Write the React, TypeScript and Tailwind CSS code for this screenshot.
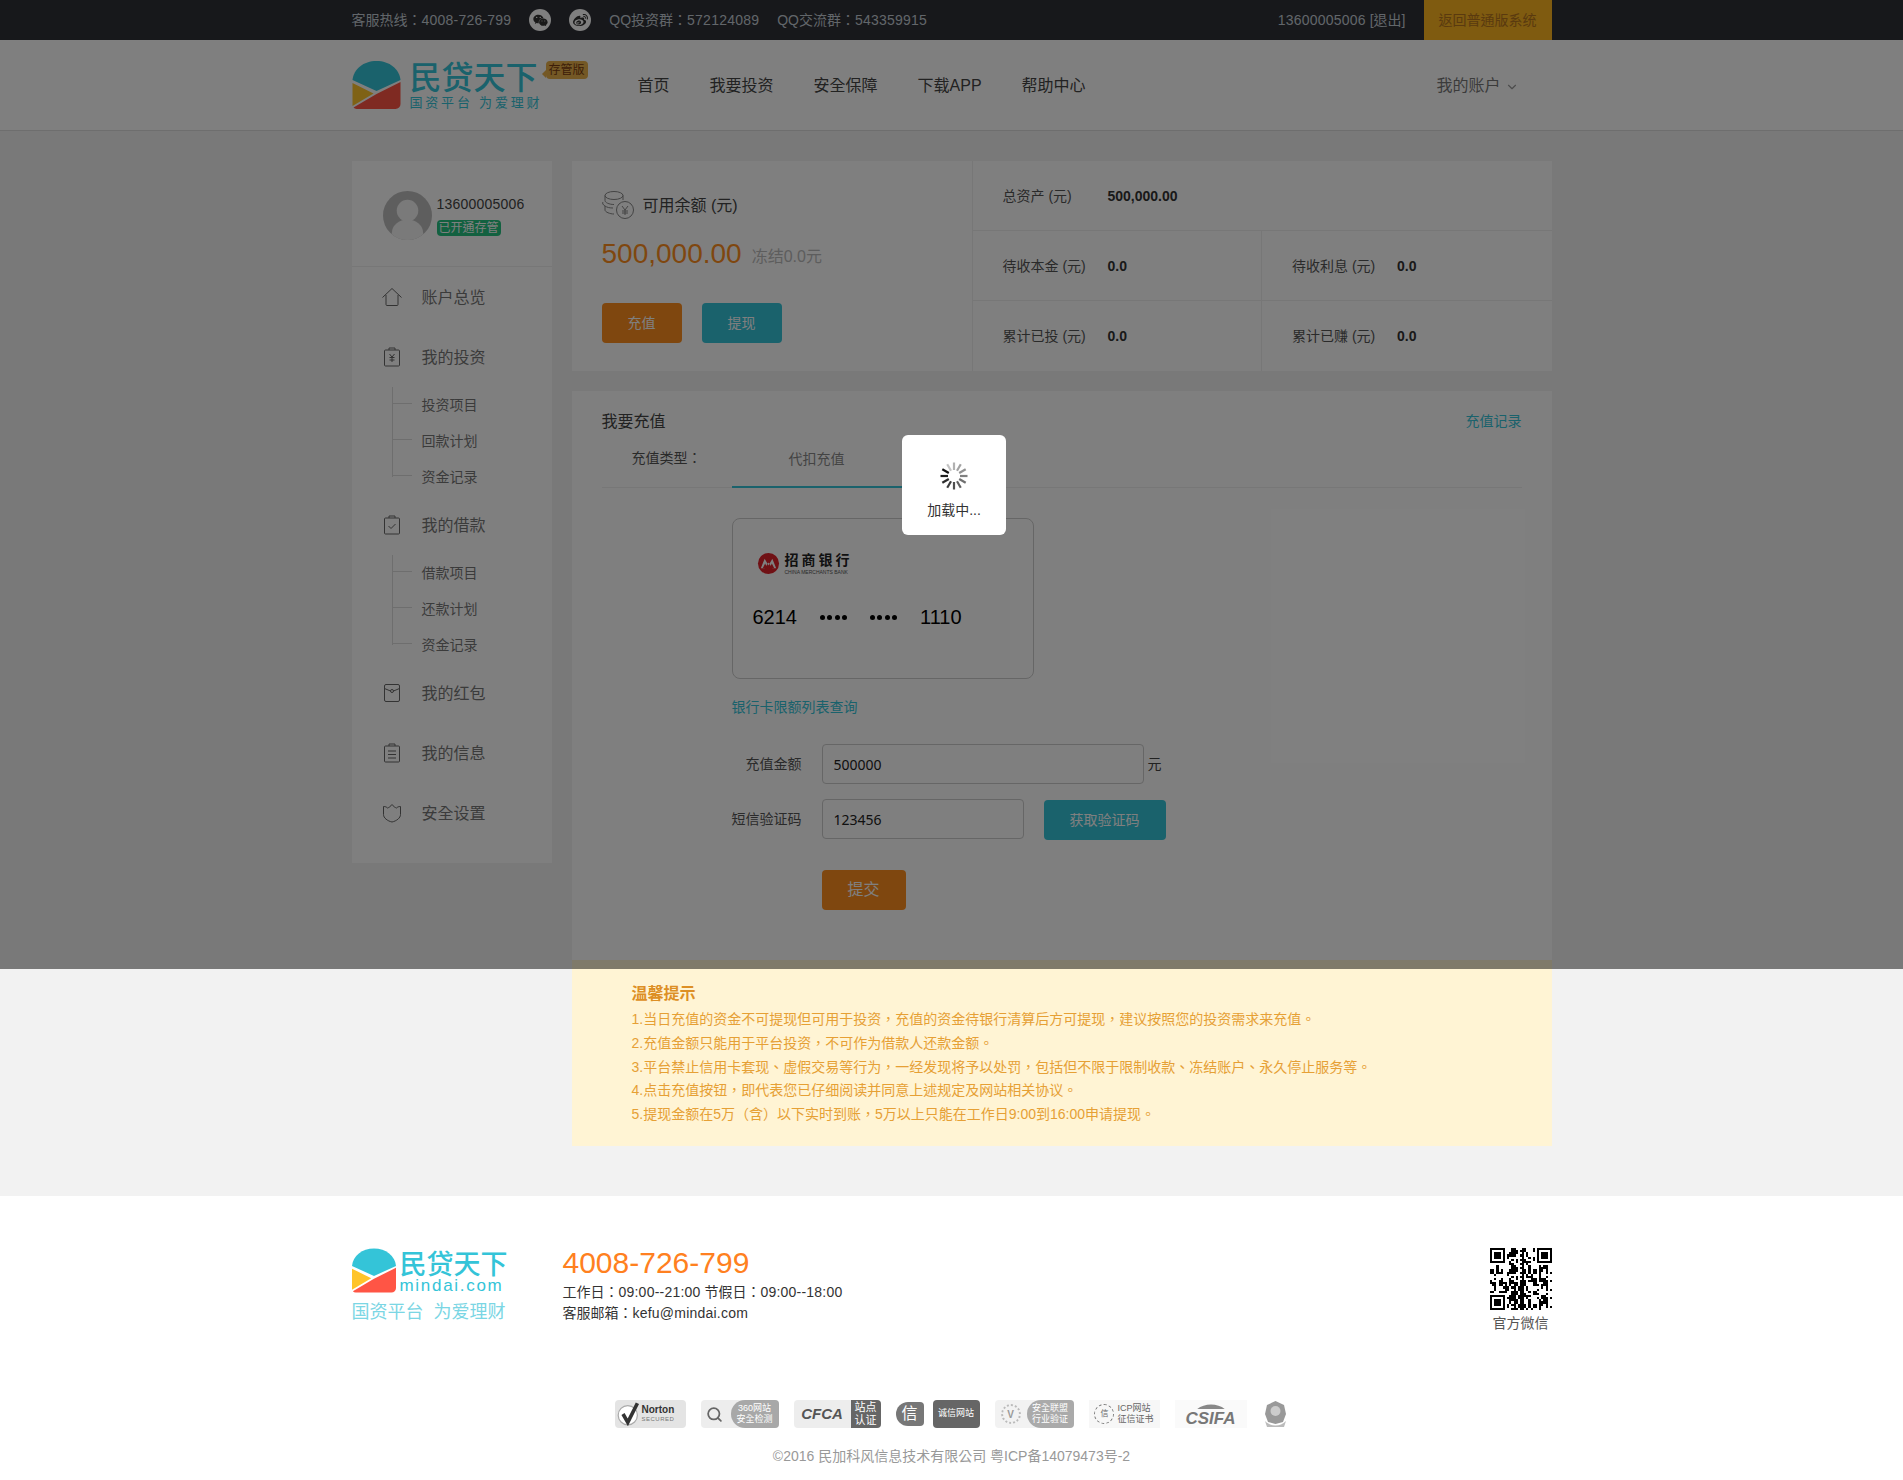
// App.tsx
import { FaWeibo, FaWeixin } from "react-icons/fa"
import { ChevronDown, Search } from "lucide-react"

const SANS = "font-['Liberation_Sans','Noto_Sans_CJK_TC',sans-serif]"

const topNav = ["首页", "我要投资", "安全保障", "下载APP", "帮助中心"]

const tips = [
  "1.当日充值的资金不可提现但可用于投资，充值的资金待银行清算后方可提现，建议按照您的投资需求来充值。",
  "2.充值金额只能用于平台投资，不可作为借款人还款金额。",
  "3.平台禁止信用卡套现、虚假交易等行为，一经发现将予以处罚，包括但不限于限制收款、冻结账户、永久停止服务等。",
  "4.点击充值按钮，即代表您已仔细阅读并同意上述规定及网站相关协议。",
  "5.提现金额在5万（含）以下实时到账，5万以上只能在工作日9:00到16:00申请提现。",
]

const LogoMark = ({ className }: { className: string }) => (
  <svg viewBox="0 0 48 48" className={className}>
    <path d="M0 19C1 8 11 0 24 0s23 8 24 19L24 30z" fill="#34c4d8" />
    <path d="M0 22l21 10.500L0 45z" fill="#ffc42a" />
    <path d="M48 21v22a5 5 0 0 1-5 5H4a4 4 0 0 1-3-1.500L24 33z" fill="#ff5545" />
  </svg>
)

const IconWrap = ({ children }: { children: React.ReactNode }) => (
  <svg viewBox="0 0 20 20" className="w-5 h-5" fill="none" stroke="#666" strokeWidth="1">
    {children}
  </svg>
)

const icons: Record<string, React.ReactNode> = {
  home: (
    <IconWrap>
      <path d="M.5 10.500 10 1.500l9.500 9M4 8v9.500a1 1 0 0 0 1 1h10a1 1 0 0 0 1-1V8" />
    </IconWrap>
  ),
  invest: (
    <IconWrap>
      <path d="M2.500 4a1 1 0 0 1 1-1h13a1 1 0 0 1 1 1v14a1 1 0 0 1-1 1h-13a1 1 0 0 1-1-1zM7 3V1h6v2" />
      <path d="M7.500 7 10 10l2.500-3M10 10v5M7.500 10.500h5M7.500 13h5" />
    </IconWrap>
  ),
  loan: (
    <IconWrap>
      <path d="M2.500 4a1 1 0 0 1 1-1h13a1 1 0 0 1 1 1v14a1 1 0 0 1-1 1h-13a1 1 0 0 1-1-1zM7 3V1h6v2" />
      <path d="m6.500 11 2.500 2.500 4.500-4.500" />
    </IconWrap>
  ),
  packet: (
    <IconWrap>
      <path d="M2.500 3a1.500 1.500 0 0 1 1.500-1.500h12A1.500 1.500 0 0 1 17.500 3v14a1.500 1.500 0 0 1-1.500 1.500H4A1.500 1.500 0 0 1 2.500 17z" />
      <path d="M2.500 5.500 8.500 8M17.500 5.500 11.500 8" />
      <circle cx="10" cy="8" r="1.500" />
    </IconWrap>
  ),
  info: (
    <IconWrap>
      <path d="M2.500 4a1 1 0 0 1 1-1h13a1 1 0 0 1 1 1v14a1 1 0 0 1-1 1h-13a1 1 0 0 1-1-1zM7 3V1h6v2M6 8h8M6 11.500h8M6 15h8" />
    </IconWrap>
  ),
  shield: (
    <IconWrap>
      <path d="M1.500 3.500c2 0 3 .5 4 1.500 1.500-.5 3-1.500 4.500-3.500 1.500 2 3 3 4.500 3.500 1-1 2-1.500 4-1.500v8c0 3.500-4 6.500-8.500 7.500-4.500-1-8.500-4-8.500-7.500z" />
    </IconWrap>
  ),
}

// the reference has whole-pixel digit widths, a hair wider than ours
const Num = ({ children }: { children: React.ReactNode }) => (
  <span className="tracking-[0.22px]">{children}</span>
)

const SubNav = ({ items }: { items: string[] }) => (
  <div className="relative">
    <div className="absolute left-[40px] top-0 h-[90px] w-px bg-[#ddd]" />
    {items.map((item) => (
      <div key={item} className="relative h-9 pl-[70px] text-sm leading-9 text-[#777]">
        <span className="absolute left-[40px] top-[16px] h-px w-5 bg-[#ddd]" />
        {item}
      </div>
    ))}
  </div>
)

const NavItem = ({ icon, label }: { icon: string; label: string }) => (
  <div className="flex h-[60px] items-center pl-[30px] text-base text-[#777]">
    {icons[icon]}
    <span className="ml-5 mt-[2px]">{label}</span>
  </div>
)

const Sidebar = () => (
  <aside className="w-[200px] bg-white pb-5">
    <div className="flex h-[106px] items-center border-b border-[#eee] pl-[31px] pt-[3px]">
      <svg viewBox="0 0 50 50" className="h-[49px] w-[49px]">
        <defs>
          <clipPath id="avatar">
            <circle cx="25" cy="25" r="25" />
          </clipPath>
        </defs>
        <circle cx="25" cy="25" r="25" fill="#bdbdbd" />
        <g clipPath="url(#avatar)" fill="#f5f5f5">
          <circle cx="25" cy="20" r="11" />
          <ellipse cx="25" cy="43" rx="16" ry="14" />
        </g>
      </svg>
      <div className="-mt-[2px] ml-[5px]">
        <div className="text-sm leading-[22px] text-[#444]">
          <Num>13600005006</Num>
        </div>
        <div className="mt-[5px] h-4 w-16 rounded-sm bg-[#26c281] text-center text-xs leading-4 text-white">
          已开通存管
        </div>
      </div>
    </div>
    <NavItem icon="home" label="账户总览" />
    <NavItem icon="invest" label="我的投资" />
    <SubNav items={["投资项目", "回款计划", "资金记录"]} />
    <NavItem icon="loan" label="我的借款" />
    <SubNav items={["借款项目", "还款计划", "资金记录"]} />
    <NavItem icon="packet" label="我的红包" />
    <NavItem icon="info" label="我的信息" />
    <NavItem icon="shield" label="安全设置" />
  </aside>
)

const Stat = ({ label, value }: { label: string; value: string }) => (
  <div className="flex h-full items-center pl-[30px] text-sm">
    <span className="w-[105px] text-[#555]">{label}</span>
    <span className="font-bold text-[#333]">{value}</span>
  </div>
)

const CoinIcon = () => (
  <svg viewBox="0 0 32 28" className="h-7 w-8" fill="none" stroke="#888" strokeWidth="1">
    <ellipse cx="12" cy="4.500" rx="9" ry="4" />
    <path d="M3 4.500v5c0 2 4 4 9 4M1 11c-1 1 0 3 2 4v4c0 2 5 4 9 4M3 15c2 1.500 5 2 8 2" />
    <path d="M21 4.500V9" />
    <circle cx="23" cy="19" r="8.500" fill="#fff" />
    <path d="m20 15 3 4 3-4M23 19v5M20 20h6M20 22h6" />
  </svg>
)

const BalanceCard = () => (
  <div className="flex h-[210px] bg-white">
    <div className="w-[401px] shrink-0 border-r border-[#eee] pl-[30px]">
      <div className="mt-[30px] flex h-7 items-center">
        <CoinIcon />
        <span className="ml-[9px] mt-[2px] text-base text-[#444]">可用余额 (元)</span>
      </div>
      <div className="mt-[17px] flex h-9 items-center">
        <span className="text-[28px] text-[#ff8f1f]">500,000.00</span>
        <span className="ml-[10px] mt-[6px] text-base text-[#bbb]">冻结0.0元</span>
      </div>
      <div className="mt-[31px] flex gap-5">
        <button className="h-10 w-20 rounded bg-[#ff8f1f] text-sm text-white">充值</button>
        <button className="h-10 w-20 rounded bg-[#34c4d8] text-sm text-white">提现</button>
      </div>
    </div>
    <div className="grid flex-1 grid-cols-2 grid-rows-[70px_70px_70px]">
      <div className="col-span-2 border-b border-[#eee]">
        <Stat label="总资产 (元)" value="500,000.00" />
      </div>
      <div className="border-b border-r border-[#eee]">
        <Stat label="待收本金 (元)" value="0.0" />
      </div>
      <div className="border-b border-[#eee]">
        <Stat label="待收利息 (元)" value="0.0" />
      </div>
      <div className="border-r border-[#eee]">
        <Stat label="累计已投 (元)" value="0.0" />
      </div>
      <div>
        <Stat label="累计已赚 (元)" value="0.0" />
      </div>
    </div>
  </div>
)

const Dots = () => (
  <span className="flex w-[27px] justify-between">
    {[0, 1, 2, 3].map((d) => (
      <i key={d} className="block h-[5px] w-[5px] rounded-full bg-black" />
    ))}
  </span>
)

const BankCard = () => (
  <div className="ml-[130px] mt-[30px] h-[161px] w-[302px] rounded-lg border border-[#ccc] pl-5 pt-[33px]">
    <div className="flex items-center pl-[4px]">
      <svg viewBox="0 0 24 24" className="h-[23px] w-[23px]">
        <circle cx="12" cy="12" r="11" fill="#e0222a" />
        <path d="M4 17 8 7l4 7 4-7 4 10h-4l-4-6-4 6z" fill="#fff" />
        <path d="M6 17l2.500-5 2.500 5zM13 17l2.500-5 2.500 5z" fill="#e0222a" />
      </svg>
      <div className="ml-[5px]">
        <div className="text-[14px] font-bold leading-[16px] tracking-[3px] text-[#222]">招商银行</div>
        <div className="mt-[1px] whitespace-nowrap text-[5px] leading-[6px] text-[#555]">CHINA MERCHANTS BANK</div>
      </div>
    </div>
    <div className="mt-[30px] flex h-6 items-center text-xl text-black">
      <span>6214</span>
      <span className="ml-[23px]">
        <Dots />
      </span>
      <span className="ml-[23px]">
        <Dots />
      </span>
      <span className="ml-[23px]">1110</span>
    </div>
  </div>
)

const RechargeCard = () => (
  <div className="mt-5 h-[569px] bg-white px-[30px] pt-[18px]">
    <div className="flex h-6 items-center justify-between">
      <span className="mt-[2px] text-base text-[#444]">我要充值</span>
      <span className="text-sm text-[#34c4d8]">充值记录</span>
    </div>
    <div className="mt-[6px] flex h-[49px] border-b border-[#eee] text-sm">
      <span className="ml-[30px] w-[100px] leading-[38px] text-[#555]">充值类型：</span>
      <span className="h-[49px] w-[170px] border-b-2 border-[#34c4d8] pl-[57px] leading-[40px] text-[#888]">
        代扣充值
      </span>
    </div>
    <BankCard />
    <div className="ml-[130px] mt-[17px] text-sm leading-[22px] text-[#34c4d8]">银行卡限额列表查询</div>
    <div className="mt-[26px] flex items-center text-sm">
      <label className="w-[200px] text-right text-[#555]">充值金额</label>
      <input
        readOnly
        value="500000"
        className="ml-5 h-10 w-[322px] rounded border border-[#ccc] bg-white pl-[11px] font-['Noto_Sans',sans-serif] text-sm text-[#222] outline-none"
      />
      <span className="ml-[4px] text-[#444]">元</span>
    </div>
    <div className="mt-[15px] flex items-start text-sm">
      <label className="w-[200px] text-right leading-10 text-[#555]">短信验证码</label>
      <input
        readOnly
        value="123456"
        className="ml-5 h-10 w-[202px] rounded border border-[#ccc] bg-white pl-[11px] font-['Noto_Sans',sans-serif] text-sm text-[#222] outline-none"
      />
      <button className="ml-5 mt-[1px] h-10 w-[122px] rounded bg-[#34c4d8] text-sm text-white">获取验证码</button>
    </div>
    <button className="ml-[220px] mt-[30px] h-10 w-[84px] rounded bg-[#ff8f1f] text-base text-white">提交</button>
  </div>
)

const Tips = () => (
  <div className="h-[186px] bg-[#fff4d4] pl-[60px] pt-[22px] text-[#e6a035]">
    <div className="mb-[2px] text-base font-bold leading-6 text-[#dd8f25]">温馨提示</div>
    {tips.map((tip) => (
      <div key={tip} className="text-sm leading-[23.800px]">
        {tip}
      </div>
    ))}
  </div>
)

const QrCode = () => {
  const size = 29
  const isFinder = (x: number, y: number) => {
    const test = (ox: number, oy: number) => x >= ox && x < ox + 8 && y >= oy && y < oy + 8
    return test(0, 0) || test(size - 8, 0) || test(0, size - 8)
  }
  const cells: [number, number][] = []
  for (let y = 0; y < size; y++) {
    for (let x = 0; x < size; x++) {
      if (isFinder(x, y)) continue
      if ((x * x * 7 + y * 13 + x * y * 5 + (x ^ y) * 3) % 5 < 2) cells.push([x, y])
    }
  }
  const finder = (ox: number, oy: number) => (
    <g key={`${ox}-${oy}`}>
      <rect x={ox + 0.5} y={oy + 0.5} width="6" height="6" fill="none" stroke="#000" />
      <rect x={ox + 2} y={oy + 2} width="3" height="3" fill="#000" />
    </g>
  )
  return (
    <svg viewBox={`0 0 ${size} ${size}`} className="h-[64px] w-[62px]" shapeRendering="crispEdges">
      {cells.map(([x, y]) => (
        <rect key={`${x}-${y}`} x={x} y={y} width="1" height="1" fill="#000" />
      ))}
      {finder(0, 0)}
      {finder(size - 7, 0)}
      {finder(0, size - 7)}
    </svg>
  )
}

const Badges = () => (
  <div className="flex justify-center gap-[15px]">
    <div className="flex h-7 w-[71px] items-center rounded-sm bg-[#e4e4e4] pl-[2px]">
      <svg viewBox="0 0 20 20" className="h-6 w-6 shrink-0" fill="none">
        <circle cx="9" cy="11" r="8" fill="#fff" stroke="#aaa" />
        <path d="m5 10 4 7 8-16" stroke="#333" strokeWidth="3" />
      </svg>
      <div className="ml-[1px] text-[10px] font-bold leading-[10px] text-[#333]">
        Norton
        <div className="text-[6px] font-normal leading-[8px] tracking-[0.5px] text-[#777]">SECURED</div>
      </div>
    </div>
    <div className="flex h-7 w-[78px] items-center overflow-hidden rounded-sm bg-[#ededed]">
      <Search size={17} strokeWidth={2.5} className="ml-[5px] mr-[8px] shrink-0 text-[#666]" />
      <span className="flex h-full flex-1 items-center justify-center rounded-l-[14px] bg-[#a8a8a8] text-center text-[9px] leading-[11px] text-white">
        360网站
        <br />
        安全检测
      </span>
    </div>
    <div className="flex h-7 w-[87px] items-center overflow-hidden rounded-sm bg-[#ededed]">
      <span className="flex-1 text-center text-[15px] font-bold italic text-[#555]">CFCA</span>
      <span className="flex h-full w-[30px] items-center justify-center bg-[#666] text-center text-[11px] leading-[13px] text-white">
        站点
        <br />
        认证
      </span>
    </div>
    <div className="flex h-7 w-[84px] items-center">
      <span className="flex h-[24px] w-[28px] items-center justify-center rounded-l-xl rounded-r bg-[#777] text-base leading-6 text-white">信</span>
      <span className="ml-[9px] flex h-full flex-1 items-center justify-center rounded-sm bg-[#666] text-[9px] text-white">诚信网站</span>
    </div>
    <div className="flex h-7 w-[79px] items-center overflow-hidden rounded-sm bg-[#f2f2f2]">
      <span className="mx-[6px] flex h-5 w-5 shrink-0 items-center justify-center rounded-full border-2 border-dotted border-[#bbb] text-[10px] font-bold text-[#999]">
        V
      </span>
      <span className="flex h-full flex-1 items-center justify-center rounded-l-[14px] bg-[#aaa] text-center text-[9px] leading-[11px] text-white">
        安全联盟
        <br />
        行业验证
      </span>
    </div>
    <div className="flex h-7 w-[71px] items-center justify-center gap-[3px] bg-[#f7f7f7]">
      <span className="flex h-[20px] w-[20px] items-center justify-center rounded-full border border-dashed border-[#777] text-[8px] text-[#666]">信</span>
      <span className="text-[9px] leading-[11px] text-[#666]">
        ICP网站
        <br />
        征信证书
      </span>
    </div>
    <div className="flex h-7 w-[72px] flex-col items-center justify-end bg-[#fafafa]">
      <svg viewBox="0 0 40 7" className="h-[6px] w-[40px]">
        <path d="M4 7C12 0 28 0 36 7z" fill="#888" />
      </svg>
      <span className="text-[17px] font-bold italic leading-[19px] text-[#777]">CSIFA</span>
    </div>
    <svg viewBox="0 0 27 28" className="h-7 w-[27px]">
      <path d="M13.500 1 22 5l2 9-3 8-7.500 2-7.500-2-3-8 2-9z" fill="#999" />
      <circle cx="13.500" cy="11" r="5" fill="#ccc" />
      <path d="M3 21c6 6 15 6 21 0l-2 6H5z" fill="#bbb" />
    </svg>
  </div>
)

const Footer = () => (
  <footer className="h-[285px] bg-white">
    <div className="mx-auto flex h-[204px] w-[1200px] pt-[52px]">
      <div className="w-[211px]">
        <div className="flex">
          <LogoMark className="h-[45px] w-[44px]" />
          <div className="ml-[4px] mt-[4px]">
            <div className="text-[27px] font-medium leading-[27px] text-[#34c4d8]">民贷天下</div>
            <div className="-mt-[2px] text-[17px] leading-[17px] tracking-[1.700px] text-[#34c4d8]">mindai.com</div>
          </div>
        </div>
        <div className="mt-[6px] text-lg leading-6 text-[#7bd6e4]">国资平台&nbsp;&nbsp;为爱理财</div>
      </div>
      <div className="flex-1 text-sm leading-[21px] text-[#333]">
        <div className="text-[30px] leading-[30px] text-[#ff8020]">4008-726-799</div>
        <div className="mt-[4px]">
          工作日：<Num>09:00--21:00</Num> 节假日：<Num>09:00--18:00</Num>
        </div>
        <div>
          客服邮箱：<Num>kefu@mindai.com</Num>
        </div>
      </div>
      <div className="-mt-[1px] flex w-[62px] flex-col items-center">
        <QrCode />
        <div className="mt-[2px] whitespace-nowrap text-sm leading-5 text-[#555]">官方微信</div>
      </div>
    </div>
    <Badges />
    <div className="mt-[17px] text-center text-sm leading-[22px] text-[#999]">
      ©2016 民加科风信息技术有限公司 粤ICP备14079473号-2
    </div>
  </footer>
)

const Spinner = () => (
  <svg viewBox="0 0 30 30" className="h-[30px] w-[30px]">
    {Array.from({ length: 12 }).map((_, i) => (
      <line
        key={i}
        x1="15"
        y1="1.500"
        x2="15"
        y2="9"
        stroke="#111"
        strokeWidth="2.200"
        opacity={0.25 + i * 0.07}
        transform={`rotate(${i * 30 - 30} 15 15)`}
      />
    ))}
  </svg>
)

export default function App() {
  return (
    <div className={`relative min-h-[1480px] bg-[#f2f2f2] ${SANS}`}>
      <div className="h-10 bg-[#2e3036] text-sm text-[#c4ccd4]">
        <div className="mx-auto flex h-full w-[1200px] items-center">
          <span>
            客服热线：<Num>4008-726-799</Num>
          </span>
          <span className="ml-[18px] flex h-[22px] w-[22px] items-center justify-center rounded-full bg-white text-[#333]">
            <FaWeixin size={15} />
          </span>
          <span className="ml-[18px] flex h-[22px] w-[22px] items-center justify-center rounded-full bg-white text-[#333]">
            <FaWeibo size={15} />
          </span>
          <span className="ml-[18px]">
            QQ投资群：<Num>572124089</Num>
          </span>
          <span className="ml-[18px]">
            QQ交流群：<Num>543359915</Num>
          </span>
          <span className="ml-auto">
            <Num>13600005006</Num> [退出]
          </span>
          <span className="ml-[18px] flex h-full w-32 items-center justify-center bg-[#feb620] text-[#b4741e]">
            返回普通版系统
          </span>
        </div>
      </div>

      <header className="h-[91px] border-b border-[#ddd] bg-white">
        <div className="mx-auto flex h-full w-[1200px] items-center">
          <div className="relative flex h-[48px] w-[285px] shrink-0">
            <LogoMark className="h-[48px] w-[49px]" />
            <div className="ml-[9px]">
              <div className="text-[32px] font-medium leading-[34px] text-[#34c4d8]">民贷天下</div>
              <div className="mt-[1px] text-[13px] leading-[14px] tracking-[2.800px] text-[#34c4d8]">国资平台 为爱理财</div>
            </div>
            <span className="absolute left-[194px] top-0 flex h-[18px] w-[42px] items-center justify-center rounded-sm bg-[#e8b04a] text-xs text-[#7a3c10]">
              <i className="absolute -left-[4px] top-[9px] h-0 w-0 border-y-[4px] border-r-[4px] border-y-transparent border-r-[#e8b04a]" />
              存管版
            </span>
          </div>
          <nav className="ml-[1px] mt-[2px] flex gap-10 text-base text-[#444]">
            {topNav.map((item) => (
              <span key={item}>{item}</span>
            ))}
          </nav>
          <div className="ml-auto mr-[33px] mt-[2px] flex items-center text-base text-[#777]">
            我的账户
            <ChevronDown size={14} className="ml-[4px] mt-[2px] text-[#999]" />
          </div>
        </div>
      </header>

      <main className="mx-auto flex w-[1200px] items-start gap-5 pb-[50px] pt-[30px]">
        <Sidebar />
        <div className="flex-1">
          <BalanceCard />
          <RechargeCard />
          <Tips />
        </div>
      </main>

      <Footer />

      {/* loading mask only covers the first screen */}
      <div className="absolute left-0 top-0 h-[969px] w-full bg-black/50" />
      <div className="absolute left-[902px] top-[435px] flex h-[100px] w-[104px] flex-col items-center rounded-md bg-white pt-[26px]">
        <Spinner />
        <div className="mt-[9px] text-sm leading-5 text-[#333]">加载中...</div>
      </div>
    </div>
  )
}
